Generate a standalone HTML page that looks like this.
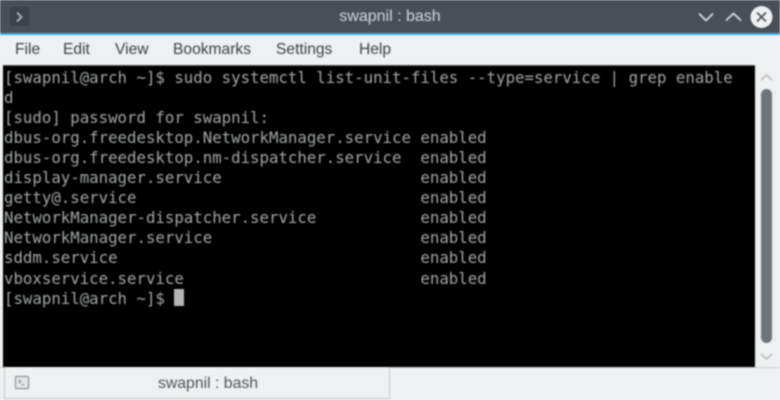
<!DOCTYPE html>
<html>
<head>
<meta charset="utf-8">
<style>
html,body{margin:0;padding:0;background:#eff0f1;}
#w{position:relative;width:780px;height:400px;overflow:hidden;background:#eff0f1;font-family:"Liberation Sans",sans-serif;}
#inner{position:absolute;left:0;top:0;width:780px;height:400px;filter:blur(.8px);}
.a{position:absolute;}
#title{left:0;top:0;width:780px;height:33px;background:#475057;}
#acc{left:0;top:33px;width:780px;height:2px;background:#3daee9;}
#btn{left:10px;top:7px;width:19px;height:19px;background:#3c4247;}
.menu{top:41px;font-size:15.6px;color:#3a3f44;line-height:18px;white-space:nowrap;}
#term{left:3px;top:65px;width:752px;height:302px;background:#000;border-top:1px solid #555;box-sizing:border-box;}
#text{left:4px;top:67.6px;margin:0;font-family:"DejaVu Sans Mono","Liberation Mono",monospace;font-size:15.73px;line-height:20.1px;color:#a4a8a8;white-space:pre;}
#cursor{left:174px;top:289px;width:10px;height:17px;background:#b5b5b5;}
#thumb{left:761px;top:89px;width:11px;height:254px;background:#6f7478;border-radius:5.5px;}
#tab{left:4px;top:367px;width:386px;height:32px;background:#eff0f1;border:1px solid #c6c9cb;border-top:none;box-sizing:border-box;}
#line{left:0;top:367px;width:780px;height:1px;background:#c9cccf;}
#tabt{left:8px;top:375px;width:400px;text-align:center;font-size:15.8px;line-height:17px;color:#4d5257;}
</style>
</head>
<body>
<div id="w"><div id="inner">
<div class="a" id="title"></div>
<div class="a" id="acc"></div>
<div class="a" id="btn"></div>
<svg class="a" style="left:0;top:0" width="780" height="400" viewBox="0 0 780 400" fill="none">
<path d="M17 12.500L21.500 17L17 21.500" stroke="#b4b8ba" stroke-width="1.800"/>
<path d="M699 13.500L706 20.500L713 13.500" stroke="#d8dadc" stroke-width="1.800"/>
<path d="M726 20.500L733.500 13.500L741 20.500" stroke="#d8dadc" stroke-width="1.800"/>
<circle cx="761.500" cy="17" r="11" fill="#eff0f1"/>
<path d="M757 12.500L766 21.500M766 12.500L757 21.500" stroke="#50585e" stroke-width="1.800"/>
<path d="M761 80L766.500 75L772 80" stroke="#b9bcbf" stroke-width="1.600"/>
<path d="M761 354L766.500 359L772 354" stroke="#b9bcbf" stroke-width="1.600"/>
</svg>
<div class="a menu" style="left:15px">File</div>
<div class="a menu" style="left:63px">Edit</div>
<div class="a menu" style="left:115px">View</div>
<div class="a menu" style="left:173px">Bookmarks</div>
<div class="a menu" style="left:276px">Settings</div>
<div class="a menu" style="left:359px">Help</div>
<div class="a" style="left:0;top:8px;width:780px;text-align:center;font-size:16px;line-height:18px;color:#d5d8da;">swapnil : bash</div>
<div class="a" id="term"></div>
<pre class="a" id="text">[swapnil@arch ~]$ sudo systemctl list-unit-files --type=service | grep enable
d
[sudo] password for swapnil:
dbus-org.freedesktop.NetworkManager.service enabled
dbus-org.freedesktop.nm-dispatcher.service  enabled
display-manager.service                     enabled
getty@.service                              enabled
NetworkManager-dispatcher.service           enabled
NetworkManager.service                      enabled
sddm.service                                enabled
vboxservice.service                         enabled
[swapnil@arch ~]$ </pre>
<div class="a" id="cursor"></div>
<div class="a" id="thumb"></div>
<div class="a" id="line"></div>
<div class="a" id="tab"></div>
<div class="a" id="tabt">swapnil : bash</div>
<svg class="a" style="left:0;top:0" width="780" height="400" viewBox="0 0 780 400" fill="none">
<rect x="15.500" y="376.500" width="13" height="12" rx="1" stroke="#8b9094" stroke-width="1.200" fill="#e6e7e8"/>
<path d="M18.500 380L21 381.500L18.500 383M21.500 384.500H24" stroke="#777c80" stroke-width="1"/>
</svg>
</div></div>
</body>
</html>
